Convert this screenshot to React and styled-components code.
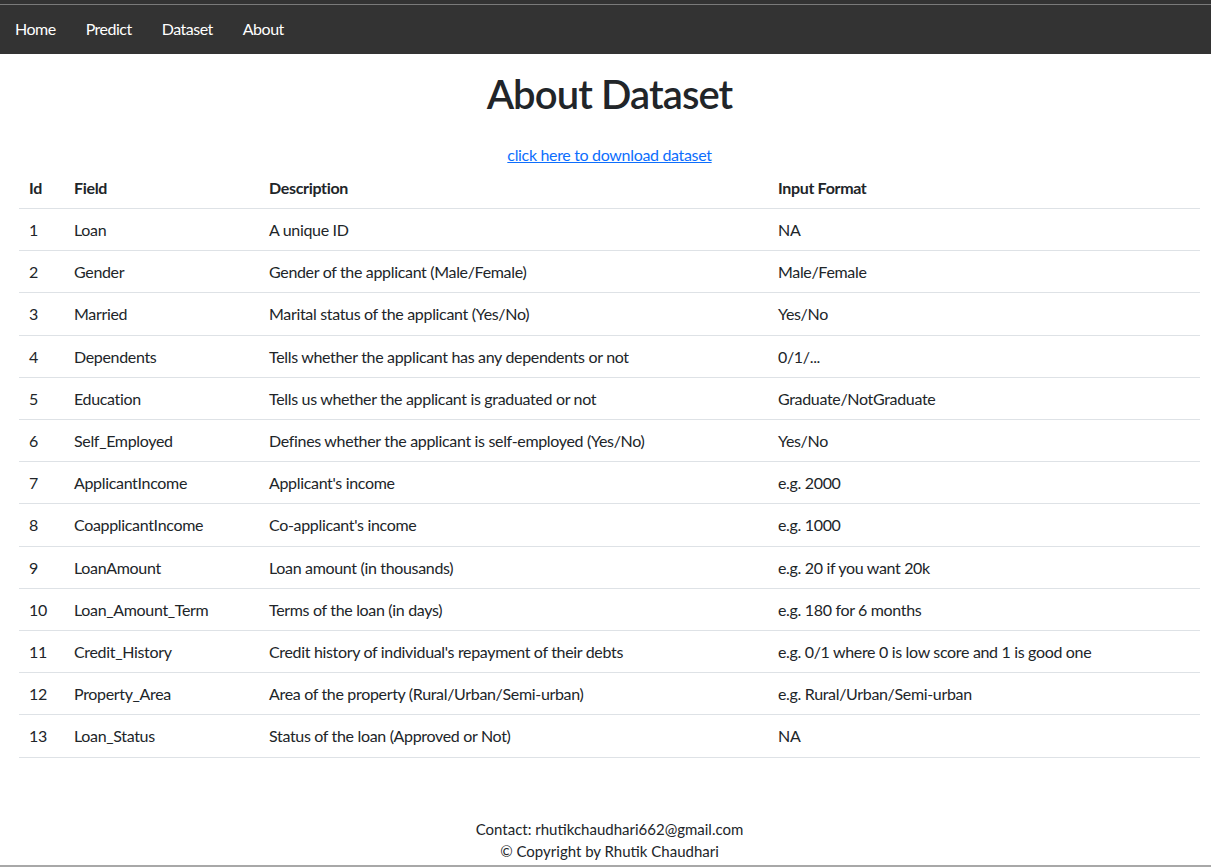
import React from "react";
import styled, { createGlobalStyle } from "styled-components";

const Global = createGlobalStyle`
  html, body { margin: 0; padding: 0; background: #fff; }
  body {
    font-family: Lato, "Open Sans", sans-serif;
    font-size: 16px;
    letter-spacing: -0.33px;
    color: #212529;
  }
  * { box-sizing: border-box; }
`;

const Page = styled.div`
  min-height: 867px;
  display: flex;
  flex-direction: column;
`;

const NavBar = styled.nav`
  height: 54px;
  background: #333333;
  border-top: 4px solid #333333;
  display: flex;
  flex-direction: column;
  &::before {
    content: "";
    display: block;
    height: 1px;
    background: #7a7a7a;
  }
`;

const NavList = styled.ul`
  list-style: none;
  margin: 0;
  padding: 0 0 2px;
  display: flex;
  flex: 1;
  align-items: center;
`;

const NavLink = styled.a`
  display: block;
  color: #ffffff;
  text-decoration: none;
  font-size: 16px;
  letter-spacing: -0.5px;
  line-height: 24px;
  padding: 0 15px;
`;

const Main = styled.main`
  padding: 0 11px 0 19px;
  flex: 1;
`;

const Title = styled.h1`
  margin: 16px 0 0;
  font-size: 40px;
  line-height: 48px;
  font-weight: 600;
  letter-spacing: -0.9px;
  text-align: center;
  color: #212529;
`;

const DownloadLine = styled.p`
  margin: 25px 0 0;
  text-align: center;
  line-height: 24px;
`;

const DownloadLink = styled.a`
  color: #0d6efd;
  text-decoration: underline;
`;

const Table = styled.table`
  width: 100%;
  border-collapse: collapse;
  table-layout: fixed;
`;

const Th = styled.th`
  text-align: left;
  font-weight: 700;
  padding: 8px 10px;
  line-height: 25px;
  border-bottom: 1px solid #dee2e6;
  width: ${(p) => p.$w || "auto"};
`;

const Td = styled.td`
  padding: 8px 10px;
  line-height: 25.2px;
  border-bottom: 1px solid #dee2e6;
  vertical-align: middle;
`;

const Footer = styled.footer`
  margin-top: 60px;
  text-align: center;
  line-height: 22px;
  font-size: 15px;
  letter-spacing: 0;
  padding: 0 11px 3px 19px;
  color: #212529;
`;

const BottomEdge = styled.div`
  height: 2px;
  background: #a8a8a8;
`;

const rows = [
  ["1", "Loan", "A unique ID", "NA"],
  ["2", "Gender", "Gender of the applicant (Male/Female)", "Male/Female"],
  ["3", "Married", "Marital status of the applicant (Yes/No)", "Yes/No"],
  ["4", "Dependents", "Tells whether the applicant has any dependents or not", "0/1/..."],
  ["5", "Education", "Tells us whether the applicant is graduated or not", "Graduate/NotGraduate"],
  ["6", "Self_Employed", "Defines whether the applicant is self-employed (Yes/No)", "Yes/No"],
  ["7", "ApplicantIncome", "Applicant's income", "e.g. 2000"],
  ["8", "CoapplicantIncome", "Co-applicant's income", "e.g. 1000"],
  ["9", "LoanAmount", "Loan amount (in thousands)", "e.g. 20 if you want 20k"],
  ["10", "Loan_Amount_Term", "Terms of the loan (in days)", "e.g. 180 for 6 months"],
  ["11", "Credit_History", "Credit history of individual's repayment of their debts", "e.g. 0/1 where 0 is low score and 1 is good one"],
  ["12", "Property_Area", "Area of the property (Rural/Urban/Semi-urban)", "e.g. Rural/Urban/Semi-urban"],
  ["13", "Loan_Status", "Status of the loan (Approved or Not)", "NA"],
];

export default function App() {
  return (
    <Page>
      <Global />
      <NavBar>
        <NavList>
          <li><NavLink href="#">Home</NavLink></li>
          <li><NavLink href="#">Predict</NavLink></li>
          <li><NavLink href="#">Dataset</NavLink></li>
          <li><NavLink href="#">About</NavLink></li>
        </NavList>
      </NavBar>
      <Main>
        <Title>About Dataset</Title>
        <DownloadLine>
          <DownloadLink href="#">click here to download dataset</DownloadLink>
        </DownloadLine>
        <Table>
          <thead>
            <tr>
              <Th $w="45px">Id</Th>
              <Th $w="195px">Field</Th>
              <Th $w="509px">Description</Th>
              <Th>Input Format</Th>
            </tr>
          </thead>
          <tbody>
            {rows.map((r) => (
              <tr key={r[0]}>
                {r.map((c, i) => (
                  <Td key={i}>{c}</Td>
                ))}
              </tr>
            ))}
          </tbody>
        </Table>
      </Main>
      <Footer>
        <div>Contact: rhutikchaudhari662@gmail.com</div>
        <div>© Copyright by Rhutik Chaudhari</div>
      </Footer>
      <BottomEdge />
    </Page>
  );
}
